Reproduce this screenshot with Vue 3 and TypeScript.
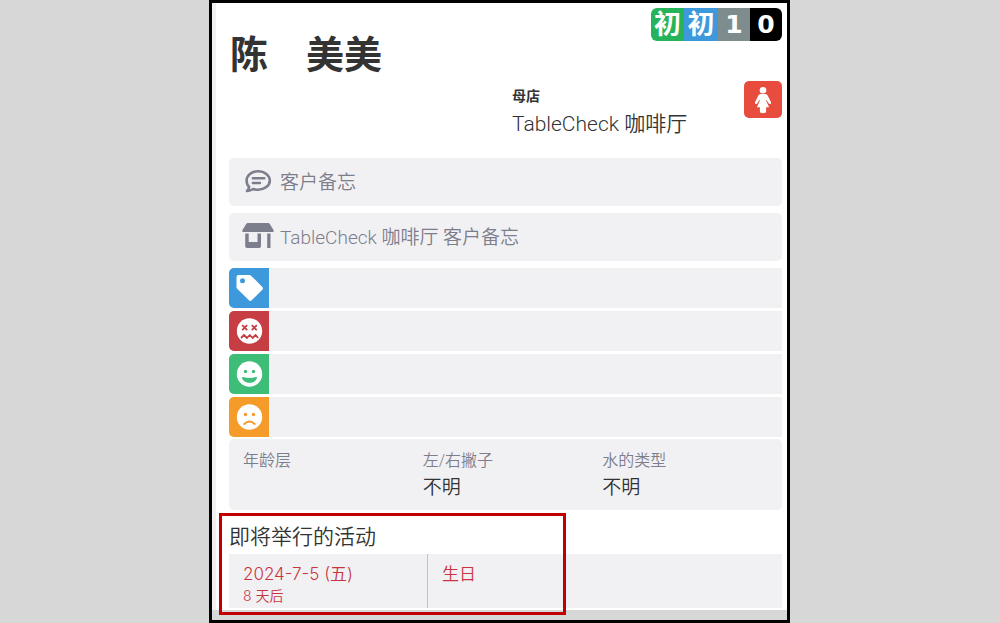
<script setup lang="ts">
interface Badge { text: string; tone: string; label: string }
interface Detail { label: string; value: string }
interface EventRow { date: string; remaining: string; name: string }

const badges: Badge[] = [
  { text: '初', tone: 'green', label: 'first' },
  { text: '初', tone: 'blue', label: 'first-shop' },
  { text: '1', tone: 'grey', label: 'visits' },
  { text: '0', tone: 'black', label: 'no-shows' },
]
const tagKinds: string[] = ['tag', 'dislike', 'like', 'sad']
const details: Detail[] = [
  { label: '年龄层', value: '' },
  { label: '左/右撇子', value: '不明' },
  { label: '水的类型', value: '不明' },
]
const events: EventRow[] = [{ date: '2024-7-5 (五)', remaining: '8 天后', name: '生日' }]
</script>

<template>
  <main class="page">
    <article class="panel">
      <div class="body">
        <header class="header">
          <h1 class="name">陈　美美</h1>
          <ul class="badges">
            <li v-for="b in badges" :key="b.label" :class="['badge', b.tone]">{{ b.text }}</li>
          </ul>
          <div class="store">
            <strong class="store-label">母店</strong>
            <span class="store-name">TableCheck 咖啡厅</span>
          </div>
          <span class="gender">
            <svg viewBox="0 0 38 37" width="38" height="37" aria-hidden="true">
              <circle cx="19" cy="9.2" r="3.3" />
              <path d="M16.6 13h4.8q1.6 0 2.3 1.5l3.2 6.6q.5 1.4-.6 1.9-1 .4-1.7-.7l-2.2-3.6-.3.8 3 6.8h-3v4.3q0 1.700-3.100 1.700t-3.100-1.700v-4.300h-3l3-6.800-.3-.8-2.200 3.600q-.7 1.100-1.700.700-1.100-.5-.6-1.900l3.200-6.600q.7-1.500 2.300-1.500z" />
            </svg>
          </span>
        </header>

        <section class="memos">
          <label class="memo">
            <svg class="memo-icon" viewBox="0 0 32 32" width="32" height="32" aria-hidden="true">
              <path d="M16 5.200c6.500 0 11.800 4.100 11.800 9.300S22.500 23.800 16 23.800c-1.700 0-3.300-.300-4.800-.800-1.700 1.100-3.900 2-6.200 1.900 1.200-1.200 1.900-2.600 2.200-4C5.300 19.200 4.600 17 4.600 14.500 4.600 9.300 9.500 5.200 16 5.200z" fill="none" stroke="currentColor" stroke-width="2.600" stroke-linejoin="round" />
              <path d="M10.800 12.200h11.500M10.800 17h7.200" stroke="currentColor" stroke-width="2.400" stroke-linecap="round" />
            </svg>
            <input class="memo-input" type="text" placeholder="客户备忘" aria-label="客户备忘" />
          </label>
          <label class="memo">
            <svg class="memo-icon" viewBox="0 0 32 32" width="32" height="32" aria-hidden="true">
              <path d="M5.800 2h20.400q1 0 1.600 1l3.700 6q1 2-1 2H1.500q-2 0-1-2l3.700-6q.6-1 1.600-1z" fill="currentColor" />
              <path fill-rule="evenodd" d="M3.200 12.500h15.800v12.700q0 1.800-1.800 1.800H5q-1.800 0-1.800-1.800zM6.700 12.500v8.500h8.800v-8.500zM25.200 12.500h3.300V27h-3.300z" fill="currentColor" />
            </svg>
            <input class="memo-input" type="text" placeholder="TableCheck 咖啡厅 客户备忘" aria-label="TableCheck 咖啡厅 客户备忘" />
          </label>
        </section>

        <ul class="tags">
          <li v-for="kind in tagKinds" :key="kind" class="tag-row">
            <span :class="['tag-icon', kind]">
              <svg viewBox="0 0 40 40" width="40" height="40" aria-hidden="true">
                <template v-if="kind === 'tag'">
                  <path d="M9.800 7h10.500q1 0 1.800.700l11.200 11.200q1.400 1.400 0 2.800L22.700 32.300q-1.400 1.400-2.800 0L8.200 20.700q-.7-.7-.7-1.700V9.300Q7.500 7 9.800 7z" fill="#fff" />
                  <circle cx="13.500" cy="12.700" r="2.500" fill="#3d99db" />
                </template>
                <template v-else>
                  <circle cx="20.500" cy="20" r="12.700" fill="#fff" />
                  <g v-if="kind === 'dislike'" fill="none" stroke="#c63d43" stroke-width="1.800">
                    <path d="M13.200 14.200l5 5m0-5l-5 5M22.800 14.200l5 5m0-5l-5 5" />
                    <path d="M12 27l3-3 3 3 2.800-3 2.800 3 3-3 2.500 3" stroke-linejoin="round" />
                  </g>
                  <template v-else>
                    <circle cx="16.500" cy="17.500" r="1.700" :fill="kind === 'like' ? '#3ebd78' : '#f59b29'" />
                    <circle cx="24.500" cy="17.500" r="1.700" :fill="kind === 'like' ? '#3ebd78' : '#f59b29'" />
                    <path v-if="kind === 'like'" d="M14 23q6.500 1.800 13 0 1-.2 1 .8c-.8 3.300-4 5-7.500 5s-6.700-1.700-7.500-5q0-1 1-.8z" fill="#3ebd78" />
                    <path v-else d="M15.300 27q5.200-5 10.400 0" fill="none" stroke="#f59b29" stroke-width="1.900" stroke-linecap="round" />
                  </template>
                </template>
              </svg>
            </span>
          </li>
        </ul>

        <dl class="details">
          <div v-for="d in details" :key="d.label" class="detail">
            <dt>{{ d.label }}</dt>
            <dd>{{ d.value }}</dd>
          </div>
        </dl>

        <section class="events">
          <h2 class="events-title">即将举行的活动</h2>
          <table class="events-table">
            <tbody>
              <tr v-for="e in events" :key="e.date">
                <td class="when">
                  <div class="date">{{ e.date }}</div>
                  <div class="remaining">{{ e.remaining }}</div>
                </td>
                <td class="what">{{ e.name }}</td>
              </tr>
            </tbody>
          </table>
          <div class="highlight"></div>
        </section>
      </div>
    </article>
  </main>
</template>

<style>
body {
  margin: 0;
  background: #d7d7d7;
}
</style>

<style scoped>
* {
  box-sizing: border-box;
}
.page {
  color: #333;
  font-family: Roboto, "Noto Sans CJK SC", sans-serif;
  font-weight: 350;
}
.panel {
  width: 58.1%;
  margin-left: 20.9%;
  padding-bottom: 10px;
  border: 3px solid #000;
  background: #d7d7d7;
}
.body {
  padding: 5px 5px 2px 13px;
  border-left: 4px solid #f1f1f4;
  background: #fff;
}
ul, dl, dd, h1, h2 {
  margin: 0;
  padding: 0;
  list-style: none;
}
.header {
  display: grid;
  grid-template-columns: 1fr 270px;
  grid-template-rows: 73px 77px;
}
.name {
  padding: 18px 0 0 1px;
  font-size: 38px;
  line-height: 58px;
  font-weight: 700;
}
.badges {
  display: flex;
  justify-self: end;
  align-self: start;
  overflow: hidden;
  border-radius: 6px;
}
.badge {
  width: 33px;
  height: 33px;
  color: #fff;
  font: 700 25px/33px "DejaVu Sans", "Noto Sans CJK SC", sans-serif;
  text-align: center;
}
.badge.green { background: #27b35a; font-size: 27px; }
.badge.blue { background: #3d99db; font-size: 27px; width: 34px; }
.badge.grey { background: #7f8c8d; width: 32px; }
.badge.black { background: #000; width: 32px; }
.store {
  grid-column: 2;
  grid-row: 2;
  display: flex;
  flex-direction: column;
  padding-top: 5px;
}
.store-label {
  font-size: 14px;
  line-height: 20px;
  font-weight: 700;
}
.store-name {
  font-size: 21px;
  line-height: 36px;
}
.gender {
  grid-column: 2;
  grid-row: 2;
  justify-self: end;
  align-self: start;
  height: 37px;
  border-radius: 5px;
  background: #e84c3d;
  fill: #fff;
}
svg {
  display: block;
}
.memos {
  display: grid;
  gap: 7px;
}
.memo {
  display: flex;
  align-items: center;
  gap: 6px;
  height: 48px;
  padding-left: 13px;
  border-radius: 5px;
  background: #f1f1f4;
  color: #7d7e8c;
}
.memo-icon {
  flex: none;
}
.memo-input {
  flex: 1;
  min-width: 0;
  height: 28px;
  padding: 0;
  border: 0;
  outline: 0;
  background: transparent;
  color: inherit;
  font: inherit;
  font-size: 19px;
}
.memo-input::placeholder {
  color: inherit;
  opacity: 1;
}
.tags {
  display: grid;
  gap: 3px;
  padding: 7px 0 2px;
}
.tag-row {
  border-radius: 5px 0 0 5px;
  overflow: hidden;
  background: #f1f1f4;
}
.tag-icon {
  display: block;
  width: 40px;
  height: 40px;
}
.tag-icon.tag { background: #3d99db; }
.tag-icon.dislike { background: #c63d43; }
.tag-icon.like { background: #3ebd78; }
.tag-icon.sad { background: #f59b29; }
.details {
  display: grid;
  grid-template-columns: repeat(3, 1fr);
  min-height: 71px;
  padding: 9px 0 0 14px;
  border-radius: 5px;
  background: #f1f1f4;
}
dt {
  color: #7d7e8c;
  font-size: 16px;
  line-height: 26px;
}
dd {
  font-size: 19px;
  line-height: 28px;
}
.events {
  position: relative;
  padding-top: 10px;
}
.events-title {
  font-size: 21px;
  line-height: 34px;
  font-weight: 350;
}
.events-table {
  width: 100%;
  border-spacing: 0;
  background: #f1f1f4;
  color: #c9353f;
  table-layout: fixed;
}
td {
  padding: 8px 14px 2px;
  vertical-align: top;
}
.when {
  width: 36%;
  border-right: 1px solid #c2c2c8;
}
.date, .what {
  font-size: 17px;
  line-height: 24px;
}
.date, .remaining {
  font-family: Inter, "Noto Sans CJK SC", sans-serif;
}
.remaining {
  font-size: 14px;
  line-height: 20px;
}
.highlight {
  position: absolute;
  top: 3px;
  bottom: -7px;
  left: -10px;
  width: 62.75%;
  border: 3px solid #c00000;
  pointer-events: none;
}
</style>
